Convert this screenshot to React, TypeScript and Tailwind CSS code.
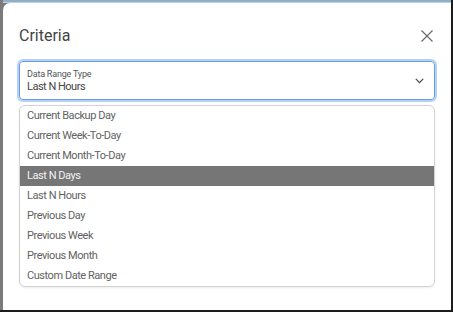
const options = [
  'Current Backup Day',
  'Current Week-To-Day',
  'Current Month-To-Day',
  'Last N Days',
  'Last N Hours',
  'Previous Day',
  'Previous Week',
  'Previous Month',
  'Custom Date Range',
];

const App = () => {
  const highlighted = 'Last N Days';
  return (
    <div className="w-[453px] h-[312px] flex bg-[#7b7b7b] border-r-2 border-b-2 border-[#1c1c1c] overflow-hidden font-['Roboto',sans-serif]">
      <div className="w-[3px] flex-none" />
      <div className="flex-1 flex flex-col">
        <div className="h-[3px] flex-none bg-[#8fb0c4] border-b border-[#b9d3e3]" />
        <div className="flex-1 bg-white rounded-tl-[7px] px-[16px] pt-[21px]">
          {/* header */}
          <div className="flex items-center justify-between">
            <h2 className="text-[16px] leading-[24px] text-[#444]">Criteria</h2>
            <button type="button" className="mr-[2px] text-[#6b6b6b]">
              <svg width="12" height="12" viewBox="0 0 12 12" fill="none" stroke="currentColor" strokeWidth={1.2}>
                <path d="M0.5 0.5L11.5 11.5M11.5 0.5L0.5 11.5" />
              </svg>
            </button>
          </div>

          {/* select */}
          <div className="mt-[13px] h-[39px] flex items-center justify-between rounded-[4px] border border-[#6c9ce6] ring-2 ring-[#b7d1f6] pl-[7px] pr-[10px]">
            <div className="flex flex-col">
              <span className="text-[9px] leading-[12px] tracking-[-0.2px] text-[#555]">Data Range Type</span>
              <span className="text-[11px] leading-[14px] tracking-[-0.5px] text-[#444]">Last N Hours</span>
            </div>
            <svg width="9" height="6" viewBox="0 0 9 6" fill="none" stroke="#444" strokeWidth={1.2}>
              <path d="M0.8 0.8L4.5 4.6L8.2 0.8" />
            </svg>
          </div>

          {/* options */}
          <ul className="mt-[5px] rounded-[6px] border border-[#d2d2d2] shadow-[0_1px_2px_rgba(0,0,0,0.08)] overflow-hidden">
            {options.map((opt) => (
              <li
                key={opt}
                className={
                  opt === highlighted
                    ? 'h-[20px] flex items-center pl-[7px] text-[11px] tracking-[-0.45px] bg-[#767676] text-[#f2f2f2]'
                    : 'h-[20px] flex items-center pl-[7px] text-[11px] tracking-[-0.45px] text-[#626262]'
                }
              >
                {opt}
              </li>
            ))}
          </ul>
        </div>
      </div>
    </div>
  );
};

export default App;
